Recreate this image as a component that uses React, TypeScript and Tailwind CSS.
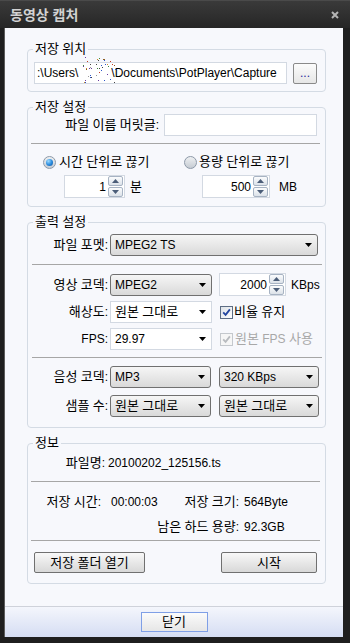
import clsx from 'clsx'

// pixelated censor over the user name in the path box
const noise = (() => {
  const cols = ['#c23b22', '#2b55c9', '#3a8a3a', '#8a5a20', '#6a3aa0', '#999', '#444', '#d08a2a']
  let s = 7
  const rnd = () => {
    s = (s * 9301 + 49297) % 233280
    return s / 233280
  }
  return Array.from({ length: 46 }, () => ({
    x: Math.floor(rnd() * 33),
    y: Math.floor(rnd() * 27),
    c: cols[Math.floor(rnd() * cols.length)],
  }))
})()

// hangul runs get a slightly larger size so they keep the 12px cell of the original font
function T({ children }: { children: string }) {
  const parts = children.split(/([\uac00-\ud7a3]+)/)
  return (
    <span>
      {parts.map((p, i) =>
        i % 2 ? (
          <span key={i} className="text-[13px]">
            {p}
          </span>
        ) : (
          p
        ),
      )}
    </span>
  )
}

function Caret({ color = '#000' }: { color?: string }) {
  return (
    <svg width="7" height="4" viewBox="0 0 7 4" className="shrink-0">
      <path d="M0 0h7L3.5 4z" fill={color} />
    </svg>
  )
}

function Dropdown({ value, className }: { value: string; className?: string }) {
  return (
    <div
      className={clsx(
        'flex h-[22px] items-center justify-between rounded-[3px] border border-[#707070] bg-linear-to-b from-[#f6f6f6] to-[#d9d9d9] pr-[5px] pl-[4px]',
        className,
      )}
    >
      <T>{value}</T>
      <Caret />
    </div>
  )
}

function Combo({ value, className }: { value: string; className?: string }) {
  return (
    <div
      className={clsx(
        'flex h-[22px] items-center justify-between border border-[#d3d9e2] bg-white pr-[5px] pl-[4px]',
        className,
      )}
    >
      <T>{value}</T>
      <Caret />
    </div>
  )
}

function SpinBtn({ up }: { up?: boolean }) {
  return (
    <div className="flex h-[10px] w-[15px] items-center justify-center rounded-[2px] border border-[#a7b3c3] bg-linear-to-b from-[#fbfcfd] to-[#dce2e9]">
      <svg width="7" height="4" viewBox="0 0 7 4">
        <path d={up ? 'M0 4h7L3.5 0z' : 'M0 0h7L3.5 4z'} fill="#4b5d78" />
      </svg>
    </div>
  )
}

function Spin({ value, className }: { value: string; className?: string }) {
  return (
    <div className={clsx('flex h-[23px] items-center border border-[#d3d9e2] bg-white pr-[1px]', className)}>
      <span className="flex-1 pr-[2px] text-right">{value}</span>
      <div className="flex flex-col gap-[1px]">
        <SpinBtn up />
        <SpinBtn />
      </div>
    </div>
  )
}

function Radio({ checked }: { checked?: boolean }) {
  return (
    <span className="flex h-[13px] w-[13px] shrink-0 items-center justify-center rounded-full border border-[#8d99a8] bg-linear-to-b from-[#eef0f2] to-[#c6ccd3]">
      {checked && (
        <span className="h-[7px] w-[7px] rounded-full bg-radial-[at_35%_30%] from-[#9fdcff] via-[#2f8fe0] to-[#0a4f9c]" />
      )}
    </span>
  )
}

function Check({ disabled }: { disabled?: boolean }) {
  return (
    <span
      className={clsx(
        'flex h-[13px] w-[13px] shrink-0 items-center justify-center border',
        disabled ? 'border-[#c4c8cd] bg-[#f6f6f6]' : 'border-[#5d6d84] bg-linear-to-br from-[#dde2e8] to-white',
      )}
    >
      <svg width="9" height="9" viewBox="0 0 9 9">
        <path
          d="M1.2 4.4l2.4 2.5L7.9 1.4"
          stroke={disabled ? '#b8bbbf' : '#2446a0'}
          strokeWidth="1.8"
          fill="none"
        />
      </svg>
    </span>
  )
}

function Button({ label, className }: { label: string; className?: string }) {
  return (
    <div
      className={clsx(
        'flex h-[21px] items-center justify-center rounded-[2px] border border-[#707070] bg-linear-to-b from-[#f8f8f8] to-[#d8d8d8]',
        className,
      )}
    >
      <T>{label}</T>
    </div>
  )
}

function Group({ title, className, children }: { title: string; className?: string; children: React.ReactNode }) {
  return (
    <div className={clsx('relative ml-[22px] w-[299px] rounded-[4px] border border-[#d4dbe4]', className)}>
      <span className="absolute top-[-8px] left-[5px] bg-[#f7f8fc] px-[2px] leading-[14px]">
        <T>{title}</T>
      </span>
      {children}
    </div>
  )
}

function Sep({ className }: { className?: string }) {
  return <div className={clsx('h-[1px] bg-[#a6a6a6]', className)} />
}

function Label({ text, className }: { text: string; className?: string }) {
  return (
    <span className={clsx('shrink-0 text-right whitespace-nowrap', className)}>
      <T>{text}</T>
    </span>
  )
}

export default function App() {
  return (
    <div className="flex h-[643px] w-[350px] flex-col bg-[#1f1f1f] font-['Liberation_Sans','Noto_Sans_CJK_KR',sans-serif] text-[12px] leading-[14px] text-black">
      {/* title bar */}
      <div className="flex h-[28px] shrink-0 items-center justify-between border-t border-[#4a4a4a] bg-linear-to-b from-[#3a3a3a] to-[#262626] pr-[11px] pl-[10px]">
        <span className="text-[14px] font-bold text-[#d2d2d2]">동영상 캡처</span>
        <svg width="8" height="8" viewBox="0 0 8 8">
          <path d="M1 1l6 6M7 1L1 7" stroke="#b4b4b4" strokeWidth="2" />
        </svg>
      </div>

      {/* client */}
      <div className="mr-[7px] mb-[6px] ml-[4px] flex flex-1 flex-col border-l border-[#5c5c5c] bg-[#f7f8fc]">
        <Group title="저장 위치" className="mt-[21px] h-[43px]">
          <div className="flex items-center gap-[6px] pt-[12px] pl-[6px]">
            <div className="relative flex h-[22px] w-[253px] items-center overflow-visible border border-[#d3d9e2] bg-white pl-[2px] whitespace-nowrap">
              <span>:\Users\</span>
              <span className="inline-block w-[33px]" />
              <span>\Documents\PotPlayer\Capture</span>
              <svg width="33" height="27" className="absolute top-[-6px] left-[48px]">
                {noise.map((d, i) => (
                  <rect key={i} x={d.x} y={d.y} width="1" height="1" fill={d.c} />
                ))}
              </svg>
            </div>
            <div className="flex h-[21px] w-[24px] items-end justify-center rounded-[2px] border border-[#8a8a8a] bg-linear-to-b from-[#fcfcfc] to-[#e6e6e6] pb-[3px] text-[#2a2a9a]">
              ...
            </div>
          </div>
        </Group>

        <Group title="저장 설정" className="mt-[15px] h-[100px]">
          <div className="flex items-center pt-[6px]">
            <Label text="파일 이름 머릿글:" className="w-[131px]" />
            <div className="ml-[5px] h-[22px] w-[153px] border border-[#d3d9e2] bg-white" />
          </div>
          <Sep className="mt-[7px] ml-[3px] w-[289px]" />
          <div className="mt-[11px] flex">
            <div className="ml-[15px] flex w-[141px] flex-col">
              <div className="flex h-[14px] items-center gap-[3px]">
                <Radio checked />
                <T>시간 단위로 끊기</T>
              </div>
              <div className="mt-[6px] flex items-center">
                <Spin value="1" className="ml-[21px] w-[61px]" />
                <span className="ml-[5px]">
                  <T>분</T>
                </span>
              </div>
            </div>
            <div className="flex flex-col">
              <div className="flex h-[14px] items-center gap-[2px]">
                <Radio />
                <T>용량 단위로 끊기</T>
              </div>
              <div className="mt-[6px] flex items-center">
                <Spin value="500" className="ml-[18px] w-[68px]" />
                <span className="ml-[9px]">MB</span>
              </div>
            </div>
          </div>
        </Group>

        <Group title="출력 설정" className="mt-[15px] h-[206px]">
          <div className="flex items-center pt-[11px]">
            <Label text="파일 포멧:" className="w-[80px]" />
            <Dropdown value="MPEG2 TS" className="ml-[2px] w-[208px]" />
          </div>
          <Sep className="mt-[8px] ml-[4px] w-[290px]" />

          <div className="mt-[8px] flex items-center">
            <Label text="영상 코덱:" className="w-[80px]" />
            <Dropdown value="MPEG2" className="ml-[2px] w-[102px]" />
            <Spin value="2000" className="ml-[7px] w-[67px]" />
            <span className="ml-[5px]">KBps</span>
          </div>
          <div className="mt-[5px] flex items-center">
            <Label text="해상도:" className="w-[80px]" />
            <Combo value="원본 그대로" className="ml-[2px] w-[102px]" />
            <span className="ml-[8px] flex items-center gap-[1px]">
              <Check />
              <T>비율 유지</T>
            </span>
          </div>
          <div className="mt-[5px] flex items-center">
            <Label text="FPS:" className="w-[80px]" />
            <Combo value="29.97" className="ml-[2px] w-[102px]" />
            <span className="ml-[8px] flex items-center gap-[2px] text-[#a8a8a8]">
              <Check disabled />
              <T>원본 FPS 사용</T>
            </span>
          </div>
          <Sep className="mt-[7px] ml-[4px] w-[290px]" />

          <div className="mt-[8px] flex items-center">
            <Label text="음성 코덱:" className="w-[80px]" />
            <Dropdown value="MP3" className="ml-[2px] w-[101px]" />
            <Dropdown value="320 KBps" className="ml-[8px] w-[100px]" />
          </div>
          <div className="mt-[7px] flex items-center">
            <Label text="샘플 수:" className="w-[80px]" />
            <Dropdown value="원본 그대로" className="ml-[2px] w-[101px]" />
            <Dropdown value="원본 그대로" className="ml-[8px] w-[100px]" />
          </div>
        </Group>

        <Group title="정보" className="mt-[15px] h-[141px]">
          <div className="mt-[12px] flex h-[14px] items-center">
            <Label text="파일명:" className="w-[77px]" />
            <span className="pl-[3px]">20100202_125156.ts</span>
          </div>
          <Sep className="mt-[11px] ml-[3px] w-[289px]" />
          <div className="mt-[13px] flex h-[14px] items-center">
            <Label text="저장 시간:" className="w-[73px]" />
            <span className="w-[71px] shrink-0 pl-[10px]">00:00:03</span>
            <Label text="저장 크기:" className="w-[67px]" />
            <span className="pl-[5px]">564Byte</span>
          </div>
          <div className="mt-[11px] flex h-[14px] items-center">
            <Label text="남은 하드 용량:" className="w-[211px]" />
            <span className="pl-[5px]">92.3GB</span>
          </div>
          <Sep className="mt-[6px] ml-[3px] w-[289px]" />
          <div className="mt-[11px] flex items-center justify-between pr-[8px] pl-[6px]">
            <Button label="저장 폴더 열기" className="w-[111px]" />
            <Button label="시작" className="w-[96px]" />
          </div>
        </Group>

        <div className="mt-auto flex h-[31px] justify-center border-t border-[#cfd2da] bg-linear-to-b from-[#f4f6fc] to-[#d5ddf3] pt-[5px]">
          <div className="flex h-[20px] w-[67px] items-center justify-center border border-[#7f9fe6] bg-linear-to-b from-[#fbfbfb] to-[#e6e6e6]">
            <T>닫기</T>
          </div>
        </div>
      </div>
    </div>
  )
}
